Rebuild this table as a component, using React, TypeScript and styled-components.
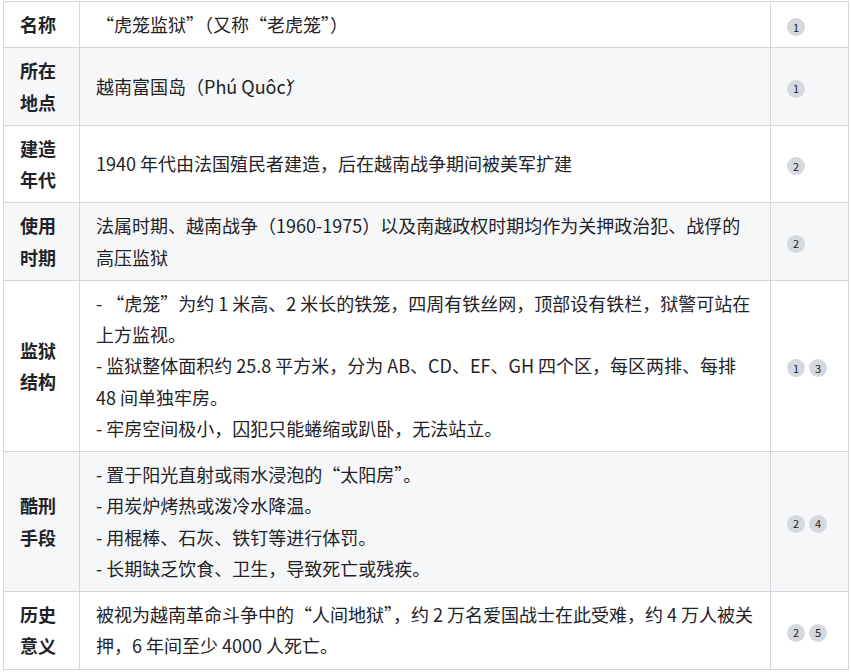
import styled, { createGlobalStyle } from "styled-components";

const GlobalStyle = createGlobalStyle`
    * {
        box-sizing: border-box;
    }
    body {
        margin: 0;
        background: #ffffff;
        font-family: "Noto Sans CJK SC", "Noto Sans", sans-serif;
        color: #1f2328;
    }
`;

const Page = styled.div`
    padding: 1px 0 0 3px;
`;

const StyledTable = styled.table`
    width: 846px;
    table-layout: fixed;
    border-collapse: separate;
    border-spacing: 0;
    border-top: 1px solid #d3d6db;
    border-left: 1px solid #d3d6db;
    font-size: 18px;
    line-height: 31.25px;
`;

const StyledRow = styled.tr<{ $shaded: boolean }>`
    background-color: ${(p) => (p.$shaded ? "#f6f7f9" : "#ffffff")};
`;

const HeadCell = styled.th`
    width: 76px;
    padding: 7px 16px;
    border-right: 1px solid #d3d6db;
    border-bottom: 1px solid #d3d6db;
    text-align: left;
    vertical-align: middle;
    font-weight: 700;
    color: #1f2328;
`;

const TextCell = styled.td`
    width: 691px;
    padding: 7px 16px;
    border-right: 1px solid #d3d6db;
    border-bottom: 1px solid #d3d6db;
    vertical-align: middle;
`;

const RefCell = styled.td`
    width: 78px;
    padding: 7px 16px;
    border-right: 1px solid #d3d6db;
    border-bottom: 1px solid #d3d6db;
    vertical-align: middle;
    white-space: nowrap;
`;

const Badge = styled.span`
    display: inline-flex;
    align-items: center;
    justify-content: center;
    width: 18px;
    height: 18px;
    margin-right: 4px;
    border-radius: 50%;
    background-color: #d5d8dd;
    color: #1f2328;
    font-size: 11px;
    line-height: 1;
    vertical-align: middle;
`;

type Row = {
    label: string;
    lines: string[];
    refs: number[];
};

const rows: Row[] = [
    { label: "名称", lines: ["“虎笼监狱”（又称“老虎笼”）"], refs: [1] },
    { label: "所在地点", lines: ["越南富国岛（Phú Quôc\u0301）"], refs: [1] },
    { label: "建造年代", lines: ["1940 年代由法国殖民者建造，后在越南战争期间被美军扩建"], refs: [2] },
    {
        label: "使用时期",
        lines: ["法属时期、越南战争（1960-1975）以及南越政权时期均作为关押政治犯、战俘的高压监狱"],
        refs: [2],
    },
    {
        label: "监狱结构",
        lines: [
            "- “虎笼”为约 1 米高、2 米长的铁笼，四周有铁丝网，顶部设有铁栏，狱警可站在上方监视。",
            "- 监狱整体面积约 25.8 平方米，分为 AB、CD、EF、GH 四个区，每区两排、每排 48 间单独牢房。",
            "- 牢房空间极小，囚犯只能蜷缩或趴卧，无法站立。",
        ],
        refs: [1, 3],
    },
    {
        label: "酷刑手段",
        lines: [
            "- 置于阳光直射或雨水浸泡的“太阳房”。",
            "- 用炭炉烤热或泼冷水降温。",
            "- 用棍棒、石灰、铁钉等进行体罚。",
            "- 长期缺乏饮食、卫生，导致死亡或残疾。",
        ],
        refs: [2, 4],
    },
    {
        label: "历史意义",
        lines: ["被视为越南革命斗争中的“人间地狱”，约 2 万名爱国战士在此受难，约 4 万人被关押，6 年间至少 4000 人死亡。"],
        refs: [2, 5],
    },
];

export default function App() {
    return (
        <Page>
            <GlobalStyle />
            <StyledTable>
                <tbody>
                    {rows.map((row, i) => (
                        <StyledRow key={row.label} $shaded={i % 2 === 1}>
                            <HeadCell>{row.label}</HeadCell>
                            <TextCell>
                                {row.lines.map((line, j) => (
                                    <span key={j}>
                                        {j > 0 && <br />}
                                        {line}
                                    </span>
                                ))}
                            </TextCell>
                            <RefCell>
                                {row.refs.map((r) => (
                                    <Badge key={r}>{r}</Badge>
                                ))}
                            </RefCell>
                        </StyledRow>
                    ))}
                </tbody>
            </StyledTable>
        </Page>
    );
}
